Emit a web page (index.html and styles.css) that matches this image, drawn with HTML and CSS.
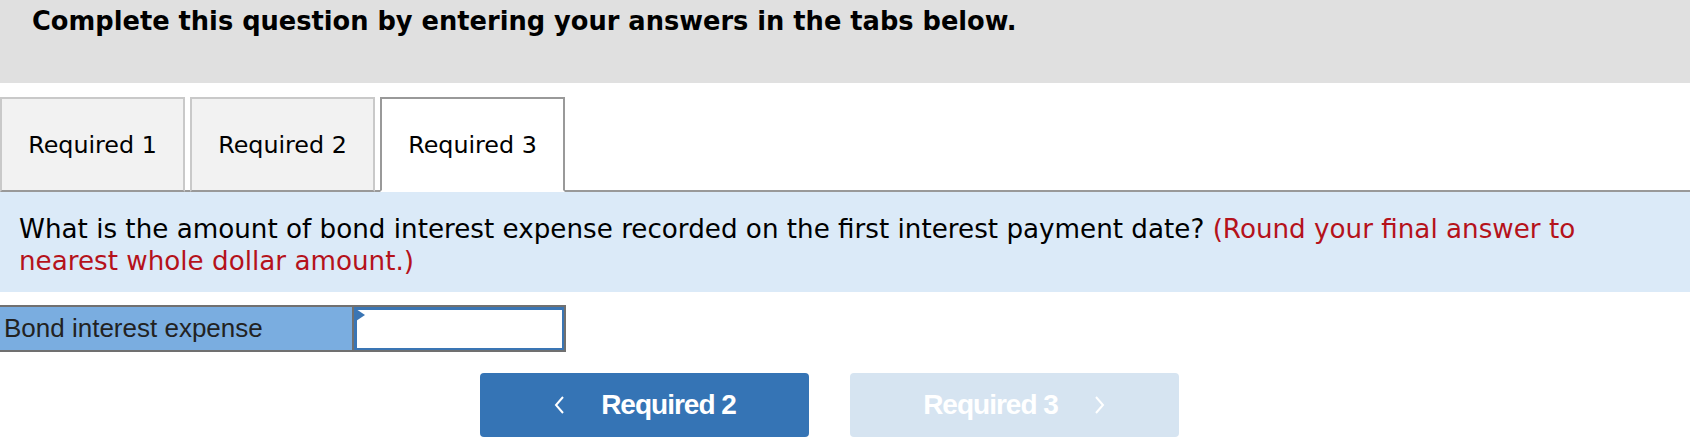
FILE: index.html
```html
<!DOCTYPE html>
<html lang="en">
<head>
  <meta charset="UTF-8" />
  <title>Required 3</title>
  <link rel="stylesheet" href="styles.css">
</head>
<body>

  <div class="header">
    <h2>Complete this question by entering your answers in the tabs below.</h2>
  </div>

  <div class="tabs">
    <div class="tab">Required 1</div>
    <div class="tab">Required 2</div>
    <div class="tab active">Required 3</div>
  </div>

  <div class="question">
    What is the amount of bond interest expense recorded on the first interest payment date?
    <span class="hint">(Round your final answer to nearest whole dollar amount.)</span>
  </div>

  <div class="answer-row">
    <div class="answer-label">Bond interest expense</div>
    <div class="answer-cell">
      <span class="marker"></span>
      <input type="text" class="answer-input">
    </div>
  </div>

  <div class="nav">
    <button class="nav-btn">
      <svg width="12" height="20" viewBox="0 0 12 20"><path d="M10 2 L3 10 L10 18" fill="none" stroke="#fff" stroke-width="2"/></svg>
      <span>Required 2</span>
    </button>
    <button class="nav-btn disabled">
      <span>Required 3</span>
      <svg width="12" height="20" viewBox="0 0 12 20"><path d="M2 2 L9 10 L2 18" fill="none" stroke="#fff" stroke-width="2"/></svg>
    </button>
  </div>

</body>
</html>
```

FILE: styles.css
```css
body {
  margin: 0;
  font-family: "DejaVu Sans", Verdana, sans-serif;
  color: #000;
  background: #fff;
}

.header {
  background-color: #e0e0e0;
  height: 83px;
  padding-left: 32px;
  box-sizing: border-box;
}

.header h2 {
  margin: 0;
  padding-top: 6px;
  font-size: 25.7px;
  font-weight: bold;
}

.tabs {
  display: flex;
  gap: 5px;
  margin-top: 14px;
  border-bottom: 2px solid #999;
}

.tab {
  width: 185px;
  height: 95px;
  box-sizing: border-box;
  margin-bottom: -2px;
  display: flex;
  align-items: center;
  justify-content: center;
  font-size: 23.8px;
  background-color: #f2f2f2;
  border: 2px solid #c9c9c9;
  border-bottom: 2px solid #999;
}

.tab.active {
  background-color: #fff;
  border-color: #999;
  border-bottom-color: #fff;
}

.question {
  background-color: #dbeaf8;
  padding: 21px 80px 15px 19px;
  font-size: 26.2px;
  line-height: 32px;
}

.hint {
  color: #b5121b;
}

.answer-row {
  display: flex;
  width: 566px;
  height: 47px;
  margin-top: 13px;
  box-sizing: border-box;
  border: 2px solid #707070;
  border-left: none;
}

.answer-label {
  flex: 0 0 354px;
  background-color: #7aade0;
  border-right: 2px solid #707070;
  font-family: "Liberation Sans", Arial, sans-serif;
  font-size: 26px;
  color: #222;
  display: flex;
  align-items: center;
  padding-left: 4px;
  box-sizing: border-box;
}

.answer-cell {
  position: relative;
  flex: 1;
  min-width: 0;
  display: flex;
}

.answer-input {
  flex: 1;
  min-width: 0;
  margin: 0;
  border: 3px solid #3a75b4;
  border-right-width: 2px;
  border-bottom-width: 2px;
  padding: 0 6px;
  outline: none;
  font-size: 20px;
}

.marker {
  position: absolute;
  left: 2px;
  top: 2px;
  width: 0;
  height: 0;
  border-top: 6px solid transparent;
  border-bottom: 6px solid transparent;
  border-left: 9px solid #3a75b4;
}

.nav {
  display: flex;
  gap: 41px;
  padding-left: 480px;
  margin-top: 21px;
}

.nav-btn {
  width: 329px;
  height: 64px;
  border: none;
  border-radius: 4px;
  background-color: #3574b5;
  color: #fff;
  font-family: "Liberation Sans", Arial, sans-serif;
  font-weight: bold;
  font-size: 28px;
  letter-spacing: -1px;
  display: flex;
  align-items: center;
  justify-content: center;
  gap: 36px;
  cursor: pointer;
}

.nav-btn.disabled {
  background-color: #d6e4f1;
  cursor: default;
}
```
